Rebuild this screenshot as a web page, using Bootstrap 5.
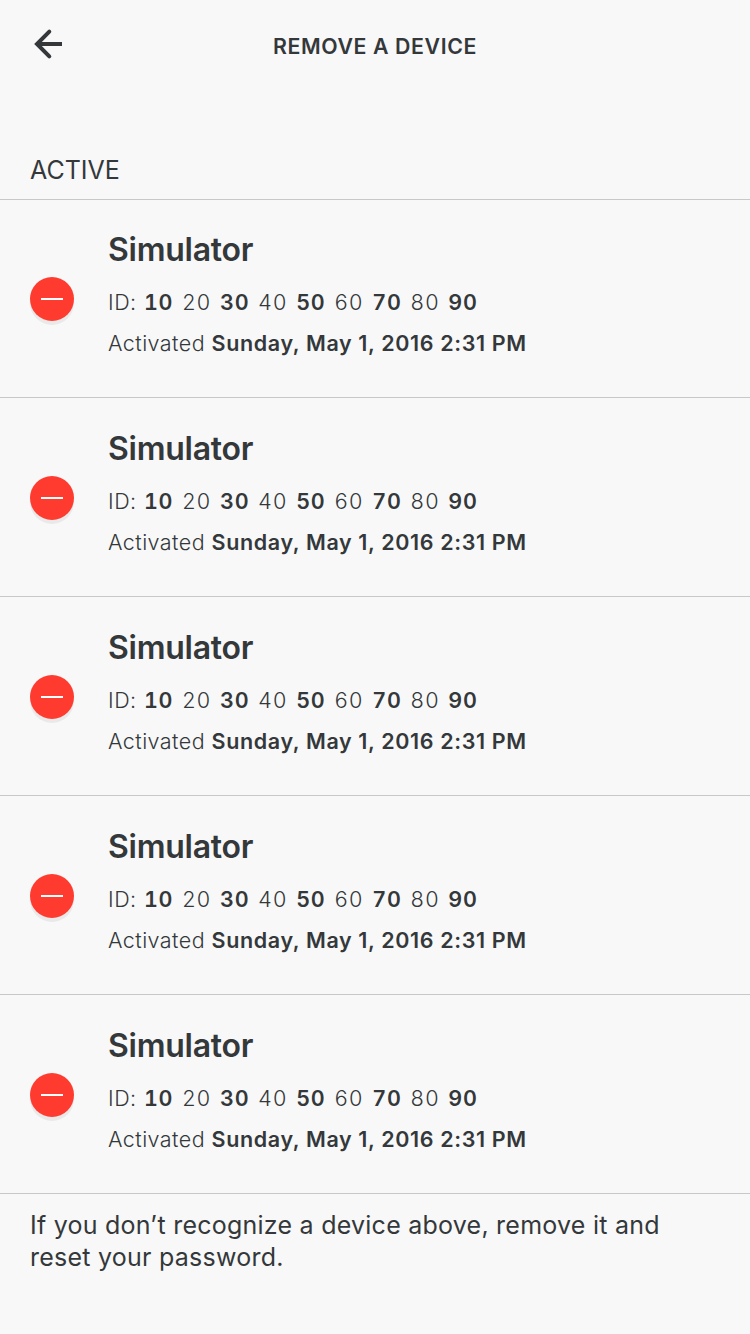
<!DOCTYPE html>
<html lang="en">
<head>
<meta charset="utf-8">
<meta name="viewport" content="width=device-width, initial-scale=1">
<title>Remove a device</title>
<link href="https://cdn.jsdelivr.net/npm/bootstrap@5.3.0/dist/css/bootstrap.min.css" rel="stylesheet">
<style>
body{background:#f8f8f8;color:#34383b;font-family:Inter,"Liberation Sans",sans-serif;height:1334px;overflow:hidden}
.topbar{height:88px;padding:0 30px}
.side{width:60px}
.title{font-size:21.3px;font-weight:600;letter-spacing:.62px;line-height:28px;padding-top:4px}
.section{height:112px;padding:0 30px 13px;border-bottom:1px solid #c8c8ca;font-size:25px;line-height:32px}
.device{height:199px;padding:31px 30px 0;border-bottom:1px solid #c8c8ca}
.device:first-child{height:198px;padding-top:30px}
.remove{width:44px;height:44px;margin-top:47px;background:#ff3b30;box-shadow:0 4px 0 rgba(0,0,0,.06)}
.info{margin-left:34px}
.name{font-size:32px;line-height:40px;font-weight:600;letter-spacing:-.25px}
.meta{font-size:21.5px;line-height:28px;font-weight:300;white-space:nowrap}
.meta b{font-weight:600}
.ids{margin-top:18px;letter-spacing:.5px}
.digits{font-variant-numeric:tabular-nums;letter-spacing:.75px;word-spacing:2.2px;margin-left:.7px}
.when{margin-top:13px;letter-spacing:.45px}
.when b{letter-spacing:.63px}
.note{padding:15px 30px;font-size:25px;line-height:32px;letter-spacing:.24px}
</style>
</head>
<body>
<header class="topbar d-flex align-items-center justify-content-between">
<div class="side"><svg class="d-block" width="36" height="34" viewBox="0 0 36 34" fill="none" stroke="#34383b" stroke-width="4"><path d="M19.3 4.7 7 17 19.3 29.3" stroke-linecap="round"/><path d="M7 17H32"/></svg></div>
<h1 class="title m-0"><span>REMOVE A DEVICE</span></h1>
<div class="side"></div>
</header>
<main>
<h2 class="section d-flex align-items-end m-0 fw-normal"><span>ACTIVE</span></h2>
<div id="devices">
<div class="device d-flex align-items-start">
<button class="remove btn rounded-circle border-0 p-0 d-flex align-items-center justify-content-center" aria-label="Remove"><svg width="22" height="2"><path d="M0 1H22" stroke="#fff" stroke-width="2"/></svg></button>
<div class="info">
<div class="name"><span>Simulator</span></div>
<div class="meta ids">ID: <span class="digits"><b>10</b> 20 <b>30</b> 40 <b>50</b> 60 <b>70</b> 80 <b>90</b></span></div>
<div class="meta when"><span>Activated <b>Sunday, May 1, 2016 2:31 PM</b></span></div>
</div>
</div>
</div>
<p class="note m-0"><span>If you don’t recognize a device above, remove it and</span><br><span>reset your password.</span></p>
</main>
<script src="https://cdn.jsdelivr.net/npm/bootstrap@5.3.0/dist/js/bootstrap.bundle.min.js"></script>
<script>
const list = document.getElementById('devices');
const first = list.firstElementChild;
for (let i = 1; i < 5; i++) list.appendChild(first.cloneNode(true));
</script>
</body>
</html>
